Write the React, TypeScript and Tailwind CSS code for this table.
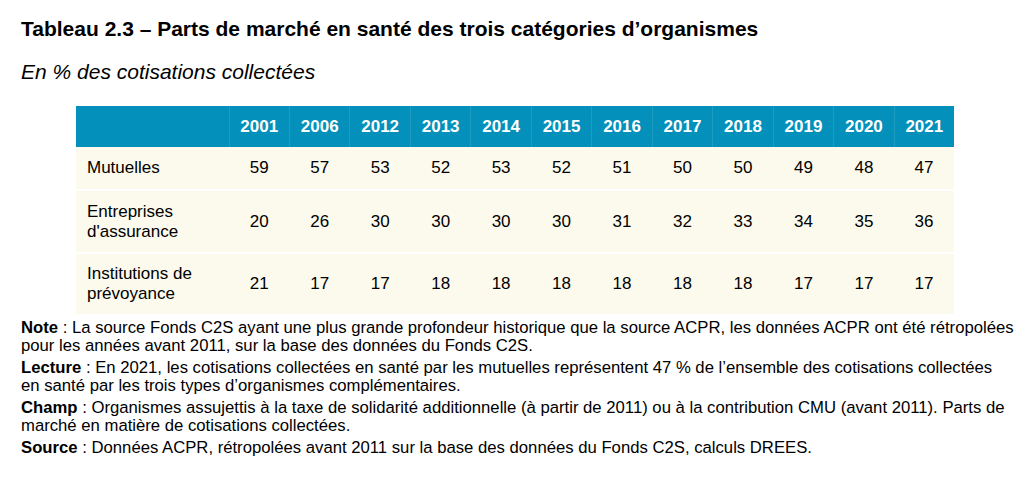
const years = ["2001", "2006", "2012", "2013", "2014", "2015", "2016", "2017", "2018", "2019", "2020", "2021"]

const rows = [
  { label: ["Mutuelles"], values: [59, 57, 53, 52, 53, 52, 51, 50, 50, 49, 48, 47], h: "h-[43px]" },
  { label: ["Entreprises", "d'assurance"], values: [20, 26, 30, 30, 30, 30, 31, 32, 33, 34, 35, 36], h: "h-[63px]" },
  { label: ["Institutions de", "prévoyance"], values: [21, 17, 17, 18, 18, 18, 18, 18, 18, 17, 17, 17], h: "h-[61px]" },
]

// line breaks follow the source document
const notes = [
  {
    key: "Note",
    lines: [
      "La source Fonds C2S ayant une plus grande profondeur historique que la source ACPR, les données ACPR ont été rétropolées",
      "pour les années avant 2011, sur la base des données du Fonds C2S.",
    ],
  },
  {
    key: "Lecture",
    lines: [
      "En 2021, les cotisations collectées en santé par les mutuelles représentent 47 % de l’ensemble des cotisations collectées",
      "en santé par les trois types d’organismes complémentaires.",
    ],
  },
  {
    key: "Champ",
    lines: [
      "Organismes assujettis à la taxe de solidarité additionnelle (à partir de 2011) ou à la contribution CMU (avant 2011). Parts de",
      "marché en matière de cotisations collectées.",
    ],
  },
  {
    key: "Source",
    lines: ["Données ACPR, rétropolées avant 2011 sur la base des données du Fonds C2S, calculs DREES."],
  },
]

export default function App() {
  return (
    <div className="w-[1023px] h-[479px] bg-white text-black font-['Liberation_Sans',Arial,sans-serif] px-[21px] pt-[16px]">
      <h1 className="text-[21px] leading-[26px] font-bold">
        Tableau 2.3 – Parts de marché en santé des trois catégories d’organismes
      </h1>
      <p className="mt-[17px] text-[21px] leading-[26px] italic">En % des cotisations collectées</p>

      <table className="mt-[21px] ml-[55px] w-[878px] border-collapse text-[17px] leading-[20px]">
        <thead>
          <tr className="h-[41px] bg-[#0391bb] text-white">
            <th className="w-[153px]" />
            {years.map((y) => (
              <th key={y} className="font-bold text-center border-l border-[#1f9cc2] first:border-l-0">
                {y}
              </th>
            ))}
          </tr>
        </thead>
        <tbody>
          {rows.map((r) => (
            <tr key={r.label[0]} className={`${r.h} bg-[#fcfaed] border-t-2 border-white first:border-t-0`}>
              <td className="pl-[11px] text-left align-middle">
                {r.label.map((l) => (
                  <div key={l}>{l}</div>
                ))}
              </td>
              {r.values.map((v, i) => (
                <td key={i} className="text-center align-middle">
                  {v}
                </td>
              ))}
            </tr>
          ))}
        </tbody>
      </table>

      <div className="mt-[5px] text-[16.7px] leading-[18px] flex flex-col gap-[4px] whitespace-nowrap">
        {notes.map((n) => (
          <p key={n.key}>
            <span className="font-bold">{n.key}</span> : {n.lines[0]}
            {n.lines.slice(1).map((l) => (
              <span key={l}>
                <br />
                {l}
              </span>
            ))}
          </p>
        ))}
      </div>
    </div>
  )
}
